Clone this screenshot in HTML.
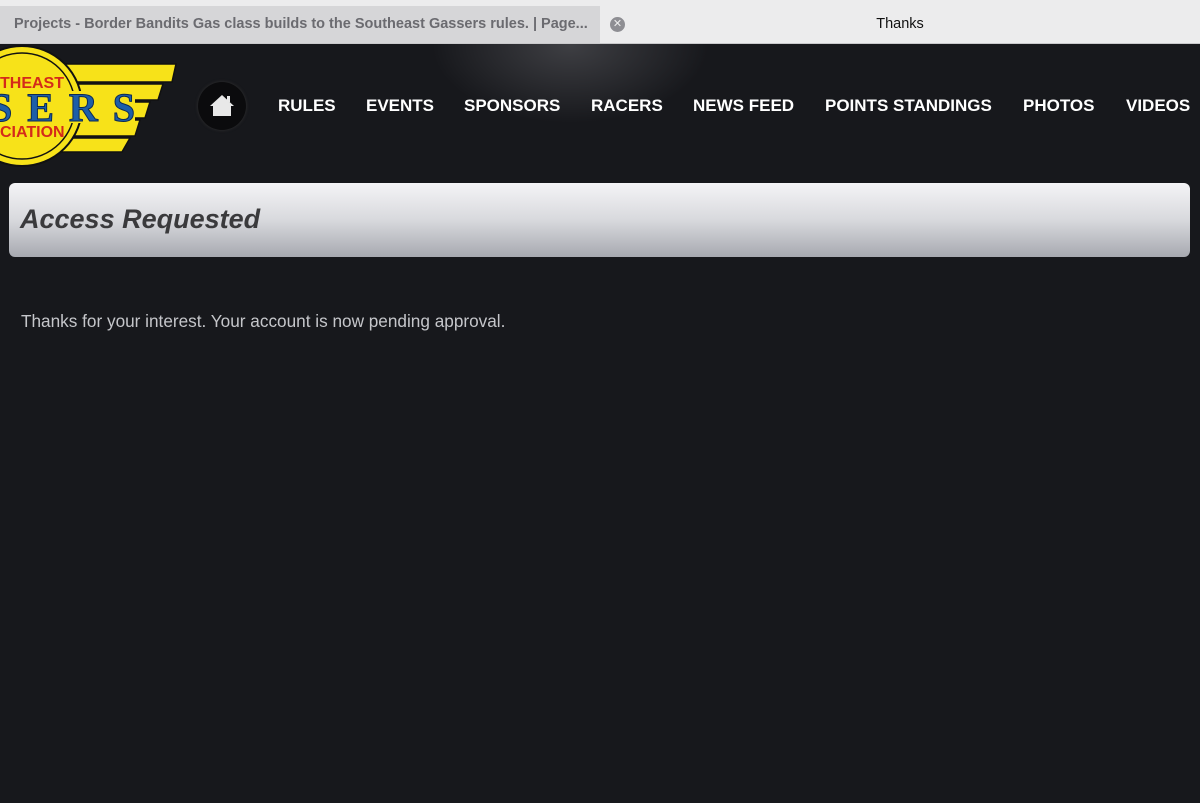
<!DOCTYPE html>
<html><head><style>
body{margin:0;width:1200px;height:803px;background:#17181c;font-family:"Liberation Sans",sans-serif;overflow:hidden;position:relative}
.tabs{position:absolute;top:0;left:0;width:1200px;height:43px;background:#ececed;border-bottom:1px solid #c9c9cb}
.t1{position:absolute;left:0;top:6px;width:600px;height:37px;background:#d6d6d8;color:#6b6b70;font-size:14.5px;font-weight:bold;line-height:37px;padding-left:14px;box-sizing:border-box}
.x{position:absolute;left:610px;top:17px;width:15px;height:15px;border-radius:50%;background:#8e8e93;color:#eee;font-size:11px;line-height:15px;text-align:center}
.t2{position:absolute;left:600px;top:6px;width:600px;line-height:37px;text-align:center;font-size:14.5px;color:#111}
.glow{position:absolute;left:420px;top:-40px;width:300px;height:170px;background:radial-gradient(ellipse at center,rgba(110,110,115,.45),rgba(23,24,28,0) 65%)}
.nav{position:absolute;top:96px;left:0;color:#fff;font-weight:bold;font-size:17px}
.nav span{position:absolute;white-space:nowrap}
.home{position:absolute;left:198px;top:82px;width:48px;height:48px;border-radius:50%;background:#0b0b0d;box-shadow:0 0 3px #333}
.box{position:absolute;left:9px;top:183px;width:1181px;height:74px;border-radius:6px;background:linear-gradient(#f4f4f6,#d8d9dd 50%,#a7a9b0);}
.box h1{margin:0;position:absolute;left:11px;top:21px;font-size:27px;font-style:italic;font-weight:bold;color:#3a3a3c}
.msg{position:absolute;left:21px;top:311px;color:#c5c6ca;font-size:17.2px}
</style></head><body>
<div class="glow"></div>
<div class="tabs"><div class="t1">Projects - Border Bandits Gas class builds to the Southeast Gassers rules. | Page...</div><div class="x">✕</div><div class="t2">Thanks</div></div>
<svg style="position:absolute;left:0;top:44px" width="180" height="126">
<path d="M60 20 L176 20 L172 38 L60 38Z M60 40 L163 40 L158 56 L60 56Z M60 58 L150 58 L145 74 L60 74Z M60 76 L140 76 L135 92 L60 92Z M60 94 L130 94 L122 108 L60 108Z" fill="#f7e219" stroke="#111" stroke-width="1.5"/>
<circle cx="22" cy="62" r="60" fill="#f7e219" stroke="#111" stroke-width="2"/>
<circle cx="22" cy="62" r="53" fill="none" stroke="#111" stroke-width="1.5"/>
<rect x="0" y="47" width="135" height="32" fill="#f7e219"/>
<text x="0" y="44" font-family="Liberation Sans" font-weight="bold" font-size="16" fill="#d42a1a">THEAST</text>
<text x="-10" y="77" font-family="Liberation Serif" font-weight="bold" font-size="40" fill="#1d5ea8" stroke="#0b2a55" stroke-width="1" textLength="145">SERS</text>
<text x="0" y="93" font-family="Liberation Sans" font-weight="bold" font-size="16" fill="#d42a1a">CIATION</text>
</svg>
<div class="home"><svg width="48" height="48"><path d="M12 24 L24 13 L36 24 L33 24 L33 34 L15 34 L15 24Z" fill="#e8e8e8"/><rect x="29" y="14" width="3" height="6" fill="#e8e8e8"/></svg></div>
<div class="nav">
<span style="left:278px">RULES</span><span style="left:366px">EVENTS</span><span style="left:464px">SPONSORS</span><span style="left:591px">RACERS</span><span style="left:693px">NEWS FEED</span><span style="left:825px">POINTS STANDINGS</span><span style="left:1023px">PHOTOS</span><span style="left:1126px">VIDEOS</span>
</div>
<div class="box"><h1>Access Requested</h1></div>
<div class="msg">Thanks for your interest. Your account is now pending approval.</div>
</body></html>
